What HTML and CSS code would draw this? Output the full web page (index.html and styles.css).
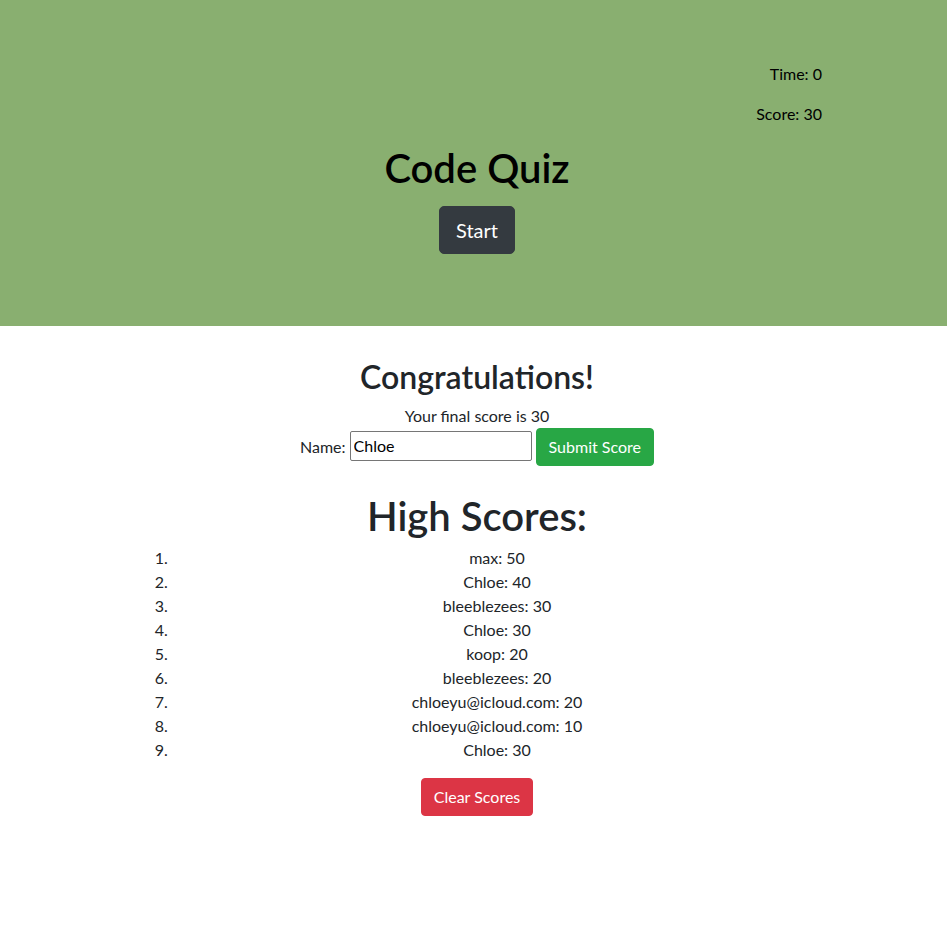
FILE: index.html
```html
<!DOCTYPE html>
<html lang="en">
<head>
<meta charset="utf-8">
<title>Code Quiz</title>
<link rel="stylesheet" href="styles.css">
</head>
<body>
<header class="hero">
  <div class="container">
    <div class="stats">
      <p>Time: 0</p>
      <p>Score: 30</p>
    </div>
    <h1 class="title">Code Quiz</h1>
    <div class="center">
      <button class="btn btn-lg btn-dark">Start</button>
    </div>
  </div>
</header>
<main class="container">
  <h2 class="congrats">Congratulations!</h2>
  <p class="final">Your final score is 30</p>
  <form class="name-form">
    <label for="name">Name:</label>
    <input id="name" class="name-input" type="text" value="Chloe">
    <button type="button" class="btn btn-success">Submit Score</button>
  </form>
  <h1 class="scores-title">High Scores:</h1>
  <ol class="scores">
    <li>max: 50</li>
    <li>Chloe: 40</li>
    <li>bleeblezees: 30</li>
    <li>Chloe: 30</li>
    <li>koop: 20</li>
    <li>bleeblezees: 20</li>
    <li>chloeyu@icloud.com: 20</li>
    <li>chloeyu@icloud.com: 10</li>
    <li>Chloe: 30</li>
  </ol>
  <div class="center">
    <button class="btn btn-danger">Clear Scores</button>
  </div>
</main>
</body>
</html>
```
FILE: styles.css
```css
* { box-sizing: border-box; }

body {
  margin: 0;
  font-family: "Lato", "Noto Sans", sans-serif;
  font-size: 16px;
  line-height: 1.5;
  color: #212529;
  background: #fff;
}

.container {
  width: 697px;
  margin: 0 auto;
  padding-left: 7px;
}

.hero {
  background: #89af70;
  padding: 62px 0 72px;
  color: #000;
}

.stats { text-align: right; }
.stats p { margin: 0 0 16px; }
.stats p:last-child { margin-bottom: 18px; }

h1, h2 {
  font-weight: 600;
  line-height: 1.2;
  text-align: center;
}

.title {
  font-size: 40px;
  margin: 0 0 14px;
}

.center { text-align: center; }

.btn {
  display: inline-block;
  font-family: inherit;
  font-size: 16px;
  line-height: 24px;
  padding: 6px 12px;
  border: 1px solid transparent;
  border-radius: 4px;
  color: #fff;
  cursor: pointer;
}

.btn-lg {
  font-size: 20px;
  line-height: 30px;
  padding: 8px 16px;
  border-radius: 5px;
}

.btn-dark { background: #343a40; border-color: #343a40; }
.btn-success { background: #28a745; border-color: #28a745; }
.btn-danger { background: #dc3545; border-color: #dc3545; }

.congrats {
  font-size: 32px;
  margin: 32px 0 8px;
}

.final {
  margin: 0;
  text-align: center;
}

.name-form {
  display: flex;
  justify-content: center;
  align-items: center;
  gap: 4px;
  height: 38px;
}

.name-input {
  width: 182px;
  height: 30px;
  font-family: inherit;
  font-size: 16px;
  line-height: 22px;
  padding: 0 3px 2px;
  border: 1px solid #767676;
  border-radius: 2px;
  color: #000;
  margin-top: -2px;
}

.scores-title {
  font-size: 40px;
  margin: 26px 0 6px;
}

.scores {
  margin: 0 0 16px;
  padding-left: 40px;
  text-align: center;
}
```
